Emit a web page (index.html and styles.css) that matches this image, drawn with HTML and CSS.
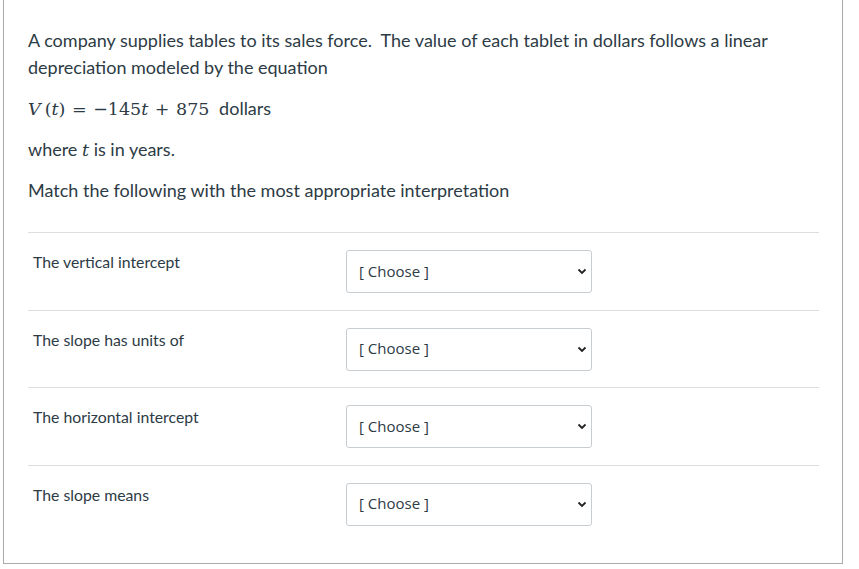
FILE: index.html
```html
<!DOCTYPE html>
<html>
<head>
<meta charset="utf-8">
<link rel="stylesheet" href="styles.css">
</head>
<body>
<div class="question">
  <div class="text">
    <p>A company supplies tables to its sales force.&nbsp; The value of each tablet in dollars follows a linear depreciation modeled by the equation</p>
    <p class="eq"><span class="math"><i>V</i><span class="gap"></span>(<i>t</i>) <span class="op">=</span> &minus;145<i>t</i> <span class="op">+</span> 875</span> dollars</p>
    <p>where <span class="math"><i>t</i></span> is in years.</p>
    <p>Match the following with the most appropriate interpretation</p>
  </div>
  <div class="answers">
    <div class="row">
      <div class="label">The vertical intercept</div>
      <div class="sel"><select><option>[ Choose ]</option></select><svg class="chev" width="10" height="7" viewBox="0 0 10 7"><path d="M1.5 1.5 L5 5 L8.5 1.5" fill="none" stroke="#222" stroke-width="1.8"/></svg></div>
    </div>
    <div class="row">
      <div class="label">The slope has units of</div>
      <div class="sel"><select><option>[ Choose ]</option></select><svg class="chev" width="10" height="7" viewBox="0 0 10 7"><path d="M1.5 1.5 L5 5 L8.5 1.5" fill="none" stroke="#222" stroke-width="1.8"/></svg></div>
    </div>
    <div class="row">
      <div class="label">The horizontal intercept</div>
      <div class="sel"><select><option>[ Choose ]</option></select><svg class="chev" width="10" height="7" viewBox="0 0 10 7"><path d="M1.5 1.5 L5 5 L8.5 1.5" fill="none" stroke="#222" stroke-width="1.8"/></svg></div>
    </div>
    <div class="row">
      <div class="label">The slope means</div>
      <div class="sel"><select><option>[ Choose ]</option></select><svg class="chev" width="10" height="7" viewBox="0 0 10 7"><path d="M1.5 1.5 L5 5 L8.5 1.5" fill="none" stroke="#222" stroke-width="1.8"/></svg></div>
    </div>
  </div>
</div>
</body>
</html>
```
FILE: styles.css
```css
html, body {
  margin: 0;
  padding: 0;
  background: #fff;
}
body {
  font-family: Lato, "Liberation Sans", sans-serif;
  color: #2d3b45;
}
.question {
  margin-left: 3px;
  width: 840px;
  height: 564px;
  border: 1px solid #aaaaaa;
  border-top: none;
  padding: 27px 23px 0 24px;
  box-sizing: border-box;
}
.text p {
  margin: 0 0 14px 0;
  font-size: 18px;
  line-height: 27px;
}
.math {
  font-family: "DejaVu Serif", "Liberation Serif", serif;
  font-size: 17.5px;
  line-height: 1;
}
.math .gap {
  display: inline-block;
  width: 4px;
}
.math .op {
  padding: 0 1px;
}
.eq .math {
  margin-right: 5px;
}
.answers {
  margin-top: 28px;
}
.row {
  display: flex;
  align-items: flex-start;
  border-top: 1px solid #dddddd;
  padding: 17px 0 17px 5px;
  height: 77.5px;
  box-sizing: border-box;
}
.label {
  width: 313px;
  font-size: 15.8px;
  margin-top: 2px;
}
.sel {
  position: relative;
  width: 246px;
  height: 43px;
}
.sel select {
  appearance: none;
  -webkit-appearance: none;
  width: 100%;
  height: 100%;
  border: 1px solid #c7cdd1;
  border-radius: 3px;
  background: #fff;
  padding: 0 12px 2px;
  font-family: "Open Sans", "Noto Sans", sans-serif;
  font-size: 15px;
  color: #2d3b45;
  box-sizing: border-box;
}
.chev {
  position: absolute;
  right: 5px;
  top: 18px;
  pointer-events: none;
}
```
